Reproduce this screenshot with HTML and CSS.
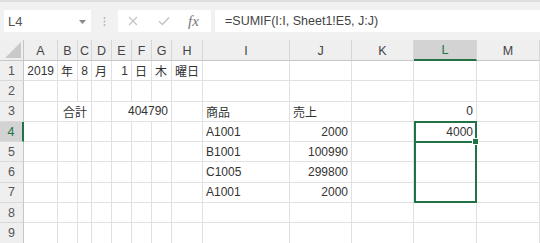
FILE: index.html
```html
<!DOCTYPE html>
<html lang="ja">
<head>
    <meta charset="UTF-8">
    <title>Sheet1</title>
    <link rel="stylesheet" href="styles.css">
</head>
<body>
    <div class="topline"></div>

    <!-- Formula bar -->
    <div class="formula-bar">
        <div class="name-box">
            <span>L4</span>
            <svg class="drop" width="7" height="4" viewBox="0 0 7 4"><path d="M0 0h7L3.5 4z" fill="#8a8a8a"/></svg>
        </div>
        <div class="grip">
            <svg width="3" height="9" viewBox="0 0 3 9"><circle cx="1.5" cy="1" r="0.9" fill="#b5b5b5"/><circle cx="1.5" cy="4.5" r="0.9" fill="#b5b5b5"/><circle cx="1.5" cy="8" r="0.9" fill="#b5b5b5"/></svg>
        </div>
        <div class="fx-buttons">
            <svg width="10" height="10" viewBox="0 0 10 10"><path d="M1 1l8 8M9 1l-8 8" stroke="#c2c2c2" stroke-width="1.1" fill="none"/></svg>
            <svg width="12" height="10" viewBox="0 0 12 10"><path d="M1 5.2l3.4 3.4L11 1.5" stroke="#c2c2c2" stroke-width="1.4" fill="none"/></svg>
            <span class="fx">fx</span>
        </div>
        <div class="formula">=SUMIF(I:I, Sheet1!E5, J:J)</div>
    </div>

    <!-- Grid -->
    <div class="sheet">
        <div class="corner"><svg width="16" height="16" viewBox="0 0 16 16"><path d="M16 0V16H0z" fill="#c9c9c9"/></svg></div>
        <div class="ch">A</div>
        <div class="ch">B</div>
        <div class="ch">C</div>
        <div class="ch">D</div>
        <div class="ch">E</div>
        <div class="ch">F</div>
        <div class="ch">G</div>
        <div class="ch">H</div>
        <div class="ch">I</div>
        <div class="ch">J</div>
        <div class="ch">K</div>
        <div class="ch active">L</div>
        <div class="ch">M</div>

        <!-- row 1 -->
        <div class="rh">1</div>
        <div class="c num">2019</div>
        <div class="c">年</div>
        <div class="c num">8</div>
        <div class="c">月</div>
        <div class="c num">1</div>
        <div class="c">日</div>
        <div class="c">木</div>
        <div class="c">曜日</div>
        <div class="c"></div>
        <div class="c"></div>
        <div class="c"></div>
        <div class="c"></div>
        <div class="c"></div>

        <!-- row 2 -->
        <div class="rh">2</div>
        <div class="c"></div>
        <div class="c"></div>
        <div class="c"></div>
        <div class="c"></div>
        <div class="c"></div>
        <div class="c"></div>
        <div class="c"></div>
        <div class="c"></div>
        <div class="c"></div>
        <div class="c"></div>
        <div class="c"></div>
        <div class="c"></div>
        <div class="c"></div>

        <!-- row 3 -->
        <div class="rh">3</div>
        <div class="c"></div>
        <div class="c span2 label">合計</div>
        <div class="c"></div>
        <div class="c span3 num">404790</div>
        <div class="c"></div>
        <div class="c">商品</div>
        <div class="c">売上</div>
        <div class="c"></div>
        <div class="c num">0</div>
        <div class="c"></div>

        <!-- row 4 -->
        <div class="rh active">4</div>
        <div class="c"></div>
        <div class="c"></div>
        <div class="c"></div>
        <div class="c"></div>
        <div class="c"></div>
        <div class="c"></div>
        <div class="c"></div>
        <div class="c"></div>
        <div class="c">A1001</div>
        <div class="c num">2000</div>
        <div class="c"></div>
        <div class="c num">4000</div>
        <div class="c"></div>

        <!-- row 5 -->
        <div class="rh">5</div>
        <div class="c"></div>
        <div class="c"></div>
        <div class="c"></div>
        <div class="c"></div>
        <div class="c"></div>
        <div class="c"></div>
        <div class="c"></div>
        <div class="c"></div>
        <div class="c">B1001</div>
        <div class="c num">100990</div>
        <div class="c"></div>
        <div class="c"></div>
        <div class="c"></div>

        <!-- row 6 -->
        <div class="rh">6</div>
        <div class="c"></div>
        <div class="c"></div>
        <div class="c"></div>
        <div class="c"></div>
        <div class="c"></div>
        <div class="c"></div>
        <div class="c"></div>
        <div class="c"></div>
        <div class="c">C1005</div>
        <div class="c num">299800</div>
        <div class="c"></div>
        <div class="c"></div>
        <div class="c"></div>

        <!-- row 7 -->
        <div class="rh">7</div>
        <div class="c"></div>
        <div class="c"></div>
        <div class="c"></div>
        <div class="c"></div>
        <div class="c"></div>
        <div class="c"></div>
        <div class="c"></div>
        <div class="c"></div>
        <div class="c">A1001</div>
        <div class="c num">2000</div>
        <div class="c"></div>
        <div class="c"></div>
        <div class="c"></div>

        <!-- row 8 -->
        <div class="rh">8</div>
        <div class="c"></div>
        <div class="c"></div>
        <div class="c"></div>
        <div class="c"></div>
        <div class="c"></div>
        <div class="c"></div>
        <div class="c"></div>
        <div class="c"></div>
        <div class="c"></div>
        <div class="c"></div>
        <div class="c"></div>
        <div class="c"></div>
        <div class="c"></div>

        <!-- row 9 -->
        <div class="rh">9</div>
        <div class="c"></div>
        <div class="c"></div>
        <div class="c"></div>
        <div class="c"></div>
        <div class="c"></div>
        <div class="c"></div>
        <div class="c"></div>
        <div class="c"></div>
        <div class="c"></div>
        <div class="c"></div>
        <div class="c"></div>
        <div class="c"></div>
        <div class="c"></div>

        <!-- selection L4:L7 with active cell L4 -->
        <div class="selection"></div>
        <div class="active-cell"><span class="handle"></span></div>
    </div>
</body>
</html>
```

FILE: styles.css
```css
body {
    margin: 0;
    height: 243px;
    overflow: hidden;
    background-color: #f1f1f1;
    font-family: 'Liberation Sans', 'Noto Sans CJK JP', sans-serif;
    color: #333;
}

.topline {
    height: 2px;
    background-color: #dedede;
}

.formula-bar {
    display: flex;
    height: 22px;
    margin-top: 8px;
    padding-left: 4px;
}

.name-box {
    width: 87px;
    background-color: #fff;
    display: flex;
    align-items: center;
    justify-content: space-between;
    padding: 0 5px 0 4px;
    box-sizing: border-box;
    font-size: 13px;
    color: #555;
}

.name-box .drop {
    margin-top: 1px;
}

.grip {
    width: 27px;
    display: flex;
    align-items: center;
    justify-content: center;
}

.fx-buttons {
    width: 93px;
    background-color: #fff;
    display: flex;
    align-items: center;
    padding-left: 10px;
    box-sizing: border-box;
    gap: 20px;
}

.fx {
    font-family: 'Liberation Serif', serif;
    font-style: italic;
    font-size: 15px;
    color: #777;
    margin-left: -2px;
}

.formula {
    flex: 1;
    margin-left: 4px;
    background-color: #fff;
    display: flex;
    align-items: center;
    padding-left: 10px;
    font-size: 12.5px;
    color: #444;
}

/* sheet grid */
.sheet {
    position: relative;
    margin-top: 8px;
    display: grid;
    grid-template-columns: 24px 34px 20px 14px 20px 20px 20px 20px 31px 87px 62px 62px 63px 63px;
    grid-template-rows: 21px repeat(9, 20.3px);
    background-color: #fff;
    font-size: 12px;
}

.corner,
.ch,
.rh {
    background-color: #efefef;
    color: #444;
    display: flex;
    align-items: center;
    justify-content: center;
    box-sizing: border-box;
    font-size: 12.5px;
}

.corner {
    align-items: flex-end;
    justify-content: flex-end;
    padding: 0 2px 2px 0;
    border-right: 1px solid #c6c6c6;
    border-bottom: 1px solid #c6c6c6;
}

.ch {
    border-right: 1px solid #d6d6d6;
    border-bottom: 1px solid #c6c6c6;
    padding-top: 1px;
}

.rh {
    border-right: 1px solid #c6c6c6;
    border-bottom: 1px solid #d9d9d9;
    color: #555;
}

.ch.active {
    background-color: #d3d3d3;
    color: #217346;
    border-bottom: 2px solid #217346;
}

.rh.active {
    background-color: #d3d3d3;
    color: #217346;
    border-right: 2px solid #217346;
}

.c {
    border-right: 1px solid #e1e1e1;
    border-bottom: 1px solid #e1e1e1;
    box-sizing: border-box;
    display: flex;
    align-items: center;
    padding: 0 3px;
    white-space: nowrap;
    min-width: 0;
}

.c.num {
    justify-content: flex-end;
}

.span2 {
    grid-column: span 2;
}

.span3 {
    grid-column: span 3;
}

.label {
    padding-left: 5px;
}

.selection {
    position: absolute;
    grid-column: 13 / 14;
    grid-row: 5 / 9;
    top: -1px;
    left: 0;
    right: 0;
    bottom: 0;
    border: 2px solid #217346;
}

.active-cell {
    position: absolute;
    grid-column: 13 / 14;
    grid-row: 5 / 6;
    top: -1px;
    left: 0;
    right: 0;
    bottom: -1px;
    border: 2px solid #217346;
}

.handle {
    position: absolute;
    right: -4px;
    bottom: -4px;
    width: 5px;
    height: 5px;
    background-color: #217346;
    border: 1px solid #fff;
}
```
